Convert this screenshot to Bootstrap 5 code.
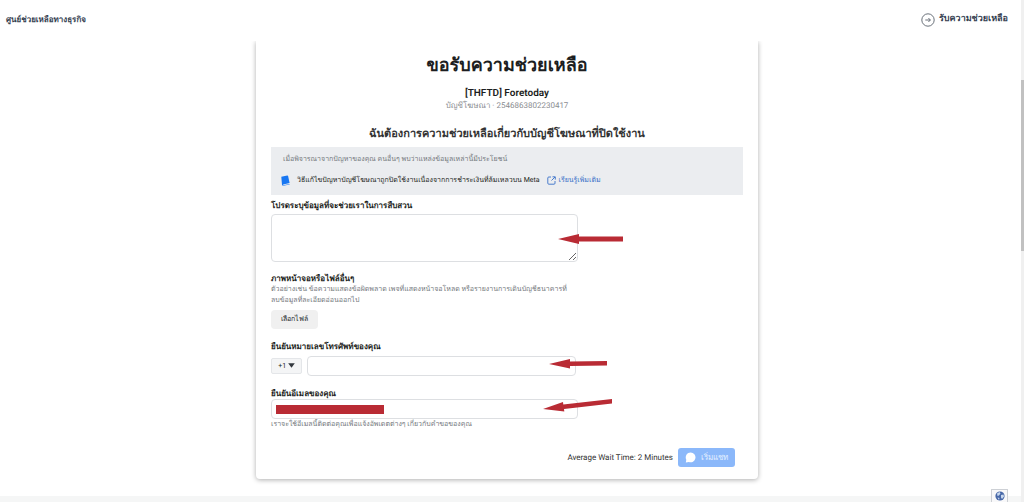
<!DOCTYPE html>
<html lang="th">
<head>
<meta charset="utf-8">
<meta name="viewport" content="width=device-width, initial-scale=1">
<title>ขอรับความช่วยเหลือ</title>
<link href="https://cdn.jsdelivr.net/npm/bootstrap@5.3.0/dist/css/bootstrap.min.css" rel="stylesheet">
<style>
body{font-family:Roboto,"Noto Sans",sans-serif;font-size:8px;line-height:11px;color:#1c1e21;background:#fff;overflow:hidden;text-rendering:geometricPrecision}
.page-shell{min-height:100vh}
.top-bar{height:41px;padding:0 16px 2px 6px;background:#fff}
.top-bar a{color:#344050;font-weight:600}
.brand-link{font-size:8px}
.help-link{font-size:9px;gap:4px}
.page-main{padding-right:10px}
.help-card{width:100%;max-width:502px;border:0;border-radius:0 0 4px 4px;box-shadow:0 1px 5px rgba(0,0,0,.32);clip-path:inset(0 -8px -8px -8px);padding:11px 15px 12px}
.page-title{font-size:18px;line-height:28px;font-weight:700}
.account-name{font-size:10px;line-height:12px;font-weight:600}
.account-id{line-height:12px;color:#8a8d91}
.topic{font-size:11px;line-height:16px;font-weight:600;margin:14px 0 5px;color:#333}
.resource-box{background:#ebedf0;height:48px;padding:7px 10px 0}
.resource-intro{padding-left:2px}
.muted-text{color:#74787d;font-size:7px}
.resource-row{margin-top:10px;gap:7px;font-size:7px}
.resource-row svg{flex:none}
.resource-row a{color:#3870c8;gap:3px}
.field-label{font-weight:600;line-height:11px}
.label-first{margin-top:5px}
.label-upload{margin-top:11px}
.field-box{width:65%}
.details-box{margin-top:3px}
.form-control{border:1px solid #dddfe2;border-radius:4px;font-size:8px;padding:2px 5px;min-height:0}
textarea.form-control{height:48px}
input.form-control{height:20px}
.soft-btn{background:#f0f0f0;border:0;border-radius:4px;font-size:7px;line-height:11px;padding:4px 10px}
.code-btn{width:31px;height:16px;padding:0;border:1px solid #e4e6e9;background:#f4f5f6;border-radius:2px;font-size:7px;line-height:11px;margin-right:5px}
.phone-input{margin-right:2px}
.redacted{left:5px;top:6px;width:108px;height:9px;background:#b92b34}
.arrow-mark{fill:#b92b34;pointer-events:none}
.arrow-details{left:287px;top:19px}
.arrow-phone{left:278px;top:2px}
.arrow-email{left:272px;top:-1px}
.wait-row{gap:5px;padding-right:8px;margin-top:18px;color:#333}
.chat-btn,.chat-btn:disabled{height:19px;width:57px;background:#8bb8fa;color:#e3efff;border:0;border-radius:3px;padding:0;font-size:8px;line-height:11px;gap:5px;opacity:1}
.foot-band{height:6px;background:#f5f6f6}
.globe-btn{right:16px;bottom:0;width:17px;height:13px;border:1px solid #cdd0d5;border-bottom:0;background:#f8f8f9;padding:0;border-radius:1px 1px 0 0}
.scroll-track{right:0;top:0;bottom:0;width:3px;background:#f0f0f0}
.scroll-thumb{top:16%;height:34%;background:#c1c1c1}
</style>
</head>
<body>
<div class="page-shell d-flex flex-column">
  <header class="top-bar d-flex align-items-center justify-content-between">
    <a class="brand-link text-decoration-none" href="#">ศูนย์ช่วยเหลือทางธุรกิจ</a>
    <a class="help-link text-decoration-none d-flex align-items-center" href="#">
      <svg width="14" height="14" viewBox="0 0 14 14" fill="none" stroke="#59616b" stroke-width=".9" aria-hidden="true"><circle cx="7" cy="7" r="6.2"/><path d="M4.3 7h5M7.4 5l2 2-2 2"/></svg>
      <span>รับความช่วยเหลือ</span>
    </a>
  </header>
  <main class="page-main flex-grow-1 d-flex align-items-start justify-content-center">
    <form class="help-card card">
      <h1 class="page-title text-center mb-0">ขอรับความช่วยเหลือ</h1>
      <div class="account-name text-center mt-2">[THFTD] Foretoday</div>
      <div class="account-id text-center">บัญชีโฆษณา · 2546863802230417</div>
      <h2 class="topic text-center">ฉันต้องการความช่วยเหลือเกี่ยวกับบัญชีโฆษณาที่ปิดใช้งาน</h2>
      <section class="resource-box">
        <div class="muted-text resource-intro">เมื่อพิจารณาจากปัญหาของคุณ คนอื่นๆ พบว่าแหล่งข้อมูลเหล่านี้มีประโยชน์</div>
        <div class="resource-row d-flex align-items-center text-nowrap">
          <svg width="9" height="11" viewBox="0 0 9 11" aria-hidden="true"><path fill="#1877f2" d="M.3 1.700 6.300.5q.6-.1.8.4l1.500 7.200-6.300 1.300q-.5.2-.4.5l.4.3 6.300-1.200v.6l-6.300 1.200Q1.200 10.800 1 10z"/></svg>
          <span>วิธีแก้ไขปัญหาบัญชีโฆษณาถูกปิดใช้งานเนื่องจากการชำระเงินที่ล้มเหลวบน Meta</span>
          <a class="text-decoration-none d-flex align-items-center" href="#">
            <svg width="9" height="9" viewBox="0 0 9 9" fill="none" stroke="#3870c8" stroke-width=".9" aria-hidden="true"><path d="M4 1H1.800q-1 0-1 1v5.200q0 1 1 1H7q1 0 1-1V5M5.500.8h2.800v2.800M8 1 4.500 4.500"/></svg>
            <span>เรียนรู้เพิ่มเติม</span>
          </a>
        </div>
      </section>

      <label class="field-label label-first" for="details">โปรดระบุข้อมูลที่จะช่วยเราในการสืบสวน</label>
      <div class="field-box details-box position-relative">
        <textarea class="form-control d-block" id="details"></textarea>
        <svg class="arrow-mark arrow-details position-absolute" width="66" height="12" viewBox="0 0 66 12" aria-hidden="true"><path d="M0 6 21 1v2.500h44v5H21V11z"/></svg>
      </div>

      <label class="field-label label-upload" for="pick-file">ภาพหน้าจอหรือไฟล์อื่นๆ</label>
      <div class="muted-text">ตัวอย่างเช่น ข้อความแสดงข้อผิดพลาด เพจที่แสดงหน้าจอโหลด หรือรายงานการเดินบัญชีธนาคารที่<br>ลบข้อมูลที่ละเอียดอ่อนออกไป</div>
      <div class="mt-1"><button class="btn soft-btn" id="pick-file" type="button">เลือกไฟล์</button></div>

      <label class="field-label mt-2 pt-1" for="phone">ยืนยันหมายเลขโทรศัพท์ของคุณ</label>
      <div class="field-box position-relative d-flex align-items-center mt-1">
        <button class="btn code-btn flex-shrink-0" type="button" aria-label="รหัสประเทศ">+1 <svg width="7" height="5" viewBox="0 0 7 5" fill="#33383e" aria-hidden="true"><path d="M.2.3h6.600L3.500 4.700z"/></svg></button>
        <input class="form-control phone-input" id="phone" type="tel">
        <svg class="arrow-mark arrow-phone position-absolute" width="59" height="11" viewBox="0 0 59 11" aria-hidden="true"><path d="M0 6 21 1v2.500L58 3v4.500L21 8v2.500z"/></svg>
      </div>

      <label class="field-label mt-2 pt-1" for="email">ยืนยันอีเมลของคุณ</label>
      <div class="field-box position-relative">
        <input class="form-control d-block" id="email" type="email">
        <span class="redacted position-absolute"></span>
        <svg class="arrow-mark arrow-email position-absolute" width="70" height="14" viewBox="0 0 70 14" aria-hidden="true"><path d="M0 11 20 4l.3 2.500L69 1v4.500L21 11l.3 2.500z"/></svg>
      </div>
      <div class="muted-text">เราจะใช้อีเมลนี้ติดต่อคุณเพื่อแจ้งอัพเดตต่างๆ เกี่ยวกับคำขอของคุณ</div>

      <div class="wait-row d-flex align-items-center justify-content-end">
        <span>Average Wait Time: 2 Minutes</span>
        <button class="btn chat-btn d-flex align-items-center justify-content-center" type="button" disabled>
          <svg width="11" height="11" viewBox="0 0 11 11" fill="#fff" aria-hidden="true"><path d="M5.700.5a4.900 4.900 0 1 1-1.800 9.500L.8 10.500l.5-2.800A4.900 4.900 0 0 1 5.700.5z"/></svg>
          <span>เริ่มแชท</span>
        </button>
      </div>
    </form>
  </main>
  <footer class="foot-band"></footer>
</div>
<button class="globe-btn position-fixed d-flex align-items-center justify-content-center" type="button" aria-label="ภาษา">
  <svg width="10" height="10" viewBox="0 0 10 10" aria-hidden="true"><circle cx="5" cy="5" r="4.600" fill="#4868a8"/><path fill="#c8d8ee" d="M2 2.500 4.500 1l1 1.500L4 4.500 2.500 5zM6 4l2.500-.5.5 2-2 2.500-1-1.500zM2.500 6.500l2 .5L4 9z"/></svg>
</button>
<div class="scroll-track position-fixed"><div class="scroll-thumb position-absolute w-100"></div></div>
<script src="https://cdn.jsdelivr.net/npm/bootstrap@5.3.0/dist/js/bootstrap.bundle.min.js"></script>
</body>
</html>
